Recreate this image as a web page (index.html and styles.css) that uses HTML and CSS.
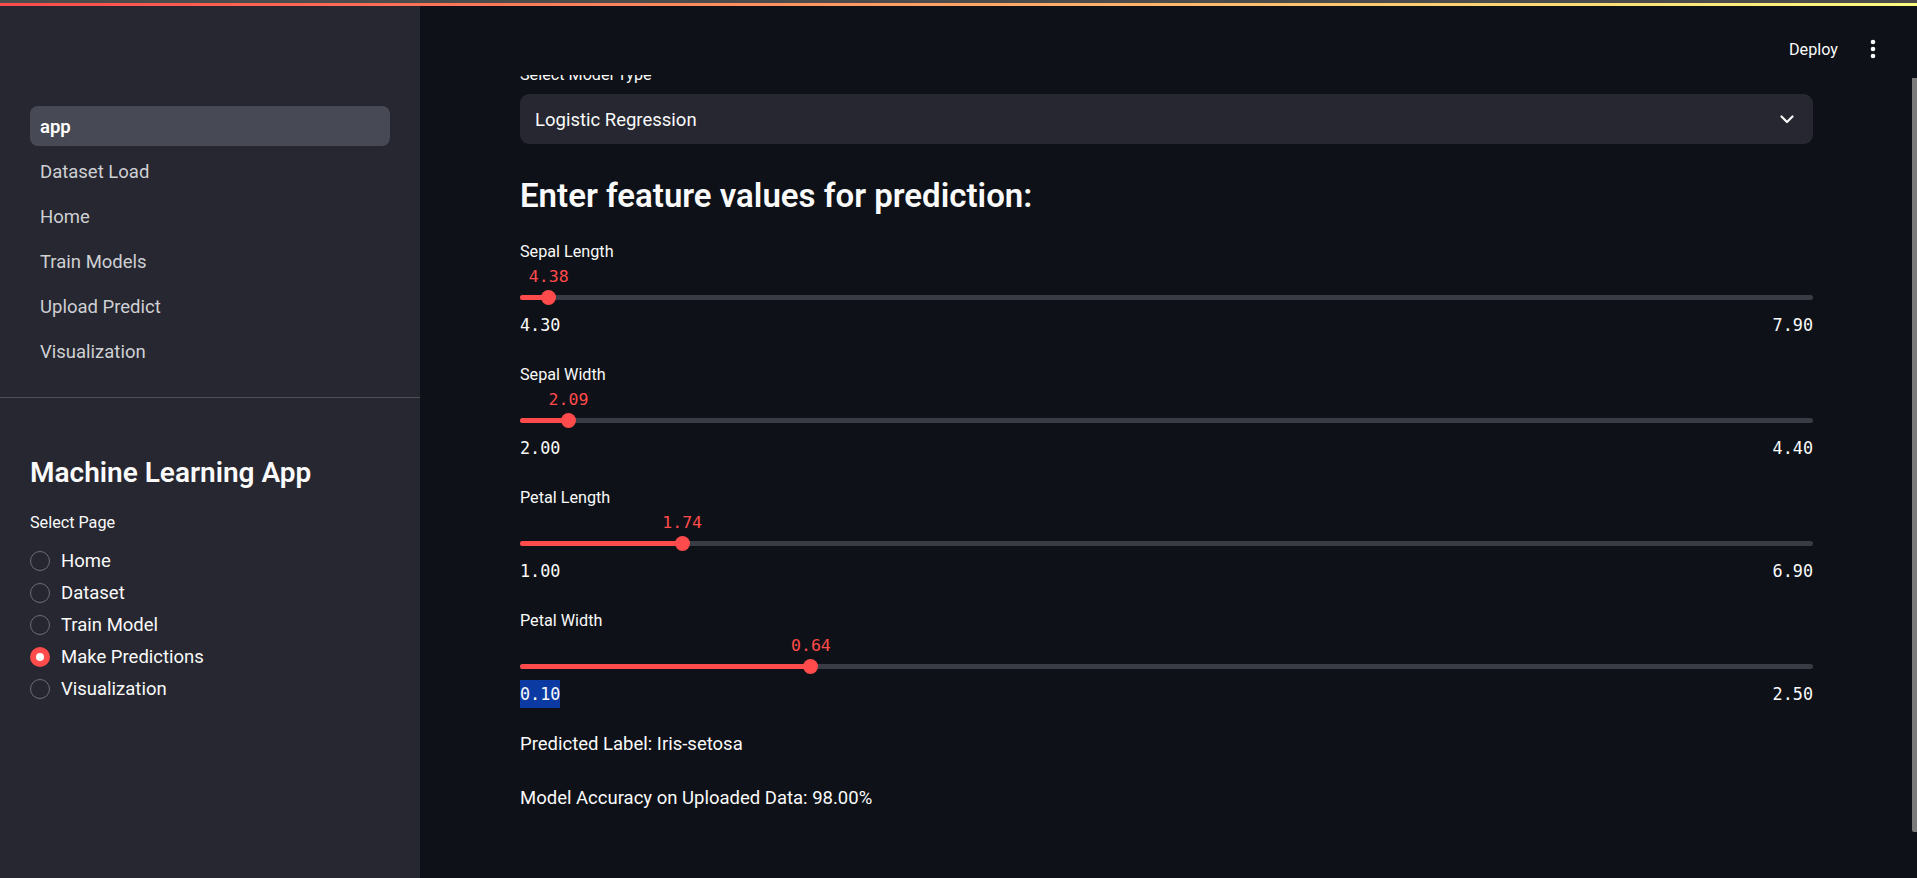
FILE: index.html
```html
<!DOCTYPE html>
<html>
<head>
<meta charset="utf-8">
<title>app</title>
<link rel="stylesheet" href="styles.css">
</head>
<body>
<div class="chrome-strip"></div>
<div class="decoration"></div>
<div class="app">
  <aside class="sidebar">
    <nav class="nav">
      <a class="nav-item active">app</a>
      <a class="nav-item">Dataset Load</a>
      <a class="nav-item">Home</a>
      <a class="nav-item">Train Models</a>
      <a class="nav-item">Upload Predict</a>
      <a class="nav-item">Visualization</a>
    </nav>
    <div class="sidebar-content">
      <h1 class="sidebar-title">Machine Learning App</h1>
      <div class="widget-label side-label">Select Page</div>
      <div class="radio-group">
        <label class="radio"><span class="radio-circle"></span><span class="radio-text">Home</span></label>
        <label class="radio"><span class="radio-circle"></span><span class="radio-text">Dataset</span></label>
        <label class="radio"><span class="radio-circle"></span><span class="radio-text">Train Model</span></label>
        <label class="radio"><span class="radio-circle checked"></span><span class="radio-text">Make Predictions</span></label>
        <label class="radio"><span class="radio-circle"></span><span class="radio-text">Visualization</span></label>
      </div>
    </div>
  </aside>
  <main class="main">
    <header class="header">
      <div class="toolbar">
        <span class="deploy">Deploy</span>
        <span class="menu">
          <svg width="6" height="20" viewBox="0 0 6 20"><circle cx="3" cy="3" r="2.3" fill="#fafafa"/><circle cx="3" cy="10" r="2.3" fill="#fafafa"/><circle cx="3" cy="17" r="2.3" fill="#fafafa"/></svg>
        </span>
      </div>
    </header>
    <div class="block">
      <div class="widget-label select-label">Select Model Type</div>
      <div class="selectbox">
        <span>Logistic Regression</span>
        <svg width="14" height="9" viewBox="0 0 14 9"><path d="M1.5 1.5 L7 7 L12.5 1.5" fill="none" stroke="#fafafa" stroke-width="2.2" stroke-linecap="round" stroke-linejoin="round"/></svg>
      </div>
      <h3 class="heading">Enter feature values for prediction:</h3>
      <div class="sliders">
        <div class="slider">
          <div class="widget-label">Sepal Length</div>
          <div class="value-row"><span class="thumb-value" style="left:2.22%">4.38</span></div>
          <div class="track-row">
            <div class="track"><div class="fill" style="width:2.22%"></div></div>
            <span class="thumb" style="left:2.22%"></span>
          </div>
          <div class="minmax"><span>4.30</span><span>7.90</span></div>
        </div>
        <div class="slider">
          <div class="widget-label">Sepal Width</div>
          <div class="value-row"><span class="thumb-value" style="left:3.75%">2.09</span></div>
          <div class="track-row">
            <div class="track"><div class="fill" style="width:3.75%"></div></div>
            <span class="thumb" style="left:3.75%"></span>
          </div>
          <div class="minmax"><span>2.00</span><span>4.40</span></div>
        </div>
        <div class="slider">
          <div class="widget-label">Petal Length</div>
          <div class="value-row"><span class="thumb-value" style="left:12.54%">1.74</span></div>
          <div class="track-row">
            <div class="track"><div class="fill" style="width:12.54%"></div></div>
            <span class="thumb" style="left:12.54%"></span>
          </div>
          <div class="minmax"><span>1.00</span><span>6.90</span></div>
        </div>
        <div class="slider">
          <div class="widget-label">Petal Width</div>
          <div class="value-row"><span class="thumb-value" style="left:22.5%">0.64</span></div>
          <div class="track-row">
            <div class="track"><div class="fill" style="width:22.5%"></div></div>
            <span class="thumb" style="left:22.5%"></span>
          </div>
          <div class="minmax"><span class="selected">0.10</span><span>2.50</span></div>
        </div>
      </div>
      <p class="result first">Predicted Label: Iris-setosa</p>
      <p class="result">Model Accuracy on Uploaded Data: 98.00%</p>
    </div>
    <div class="scrollbar"></div>
  </main>
</div>
</body>
</html>
```

FILE: styles.css
```css
* { box-sizing: border-box; }

html, body {
  margin: 0;
  padding: 0;
  width: 1917px;
  height: 878px;
  overflow: hidden;
  background: #0e1117;
  font-family: Roboto, "Liberation Sans", sans-serif;
  color: #fafafa;
}

.chrome-strip {
  position: fixed;
  top: 0;
  left: 0;
  right: 0;
  height: 3px;
  background: #4b4b4b;
  z-index: 20;
}

.decoration {
  position: fixed;
  top: 3px;
  left: 0;
  right: 0;
  height: 3px;
  background: linear-gradient(90deg, #ff4b4b, #fffd80);
  z-index: 20;
}

.app {
  display: flex;
  height: 878px;
}

/* Sidebar */
.sidebar {
  width: 420px;
  flex: none;
  background: #262730;
}

.nav {
  display: flex;
  flex-direction: column;
  gap: 5px;
  padding: 106px 30px 26px;
  border-bottom: 1px solid rgba(250, 250, 250, 0.2);
}

.nav-item {
  height: 40px;
  display: flex;
  align-items: center;
  padding: 1px 10px 0;
  border-radius: 8px;
  font-size: 18.5px;
  color: #cfd0d4;
}

.nav-item.active {
  background: #474954;
  color: #ffffff;
  font-weight: 600;
}

.sidebar-content {
  padding: 57px 30px 0;
}

.sidebar-title {
  margin: 0;
  font-size: 28px;
  line-height: 36px;
  font-weight: 600;
  color: #fafafa;
}

.widget-label {
  font-size: 16.2px;
  line-height: 24px;
  color: #fafafa;
}

.side-label {
  margin-top: 20px;
}

.radio-group {
  margin-top: 10px;
  display: flex;
  flex-direction: column;
}

.radio {
  height: 32px;
  display: flex;
  align-items: center;
  gap: 11px;
}

.radio-circle {
  width: 20px;
  height: 20px;
  border-radius: 50%;
  border: 1.5px solid #6d6e75;
  flex: none;
  display: flex;
  align-items: center;
  justify-content: center;
}

.radio-circle.checked {
  background: #ff4b4b;
  border: none;
}

.radio-circle.checked::after {
  content: "";
  width: 8px;
  height: 8px;
  border-radius: 50%;
  background: #ffffff;
}

.radio-text {
  font-size: 18.5px;
  color: #fafafa;
}

/* Main */
.main {
  flex: 1;
  position: relative;
  overflow: hidden;
  background: #0e1117;
}

.header {
  position: absolute;
  top: 0;
  left: 0;
  right: 0;
  height: 75px;
  background: #0e1117;
  z-index: 5;
  display: flex;
  justify-content: flex-end;
  align-items: flex-start;
  padding: 38px 24px 0 0;
}

.toolbar {
  display: flex;
  align-items: center;
  gap: 15px;
  height: 24px;
}

.deploy {
  font-size: 16.2px;
  line-height: 24px;
  color: #fafafa;
}

.menu {
  width: 40px;
  height: 24px;
  display: flex;
  align-items: center;
  justify-content: center;
  margin-top: -2px;
}

.block {
  display: flex;
  flex-direction: column;
  padding: 63px 104px 0 100px;
}

.selectbox {
  margin-top: 7px;
  height: 50px;
  background: #262730;
  border-radius: 9px;
  display: flex;
  align-items: center;
  justify-content: space-between;
  padding: 1px 19px 0 15px;
  font-size: 18.5px;
  color: #fafafa;
}

.selectbox svg {
  margin-top: -1px;
}

.heading {
  margin: 32px 0 0;
  font-size: 33px;
  line-height: 40px;
  font-weight: 600;
  color: #fafafa;
}

.sliders {
  margin-top: 23px;
  display: flex;
  flex-direction: column;
  gap: 23px;
}

.slider .widget-label {
  padding-top: 1px;
}

.value-row {
  position: relative;
  height: 25px;
}

.thumb-value {
  position: absolute;
  top: 0;
  transform: translateX(-50%);
  font-family: "DejaVu Sans Mono", "Liberation Mono", monospace;
  font-size: 16.5px;
  line-height: 26px;
  color: #ff4b4b;
  white-space: nowrap;
}

.track-row {
  position: relative;
  height: 16px;
  padding-top: 5.5px;
}

.track {
  height: 5px;
  border-radius: 3px;
  background: #393b45;
  overflow: hidden;
}

.fill {
  height: 100%;
  background: #ff4b4b;
}

.thumb {
  position: absolute;
  top: 0.5px;
  width: 15px;
  height: 15px;
  margin-left: -7.5px;
  border-radius: 50%;
  background: #ff4b4b;
}

.minmax {
  margin-top: 6px;
  display: flex;
  justify-content: space-between;
  font-family: "DejaVu Sans Mono", "Liberation Mono", monospace;
  font-size: 16.8px;
  line-height: 28px;
  color: #fafafa;
}

.selected {
  background: #0b3aa2;
}

.result {
  margin: 25px 0 0;
  font-size: 18.5px;
  line-height: 28px;
  color: #fafafa;
  padding-top: 1px;
}

.result.first {
  margin-top: 21px;
}

.scrollbar {
  position: absolute;
  right: 0;
  top: 78px;
  width: 5px;
  height: 754px;
  background: #7b7b7b;
  border-radius: 0 0 0 2px;
}
```
